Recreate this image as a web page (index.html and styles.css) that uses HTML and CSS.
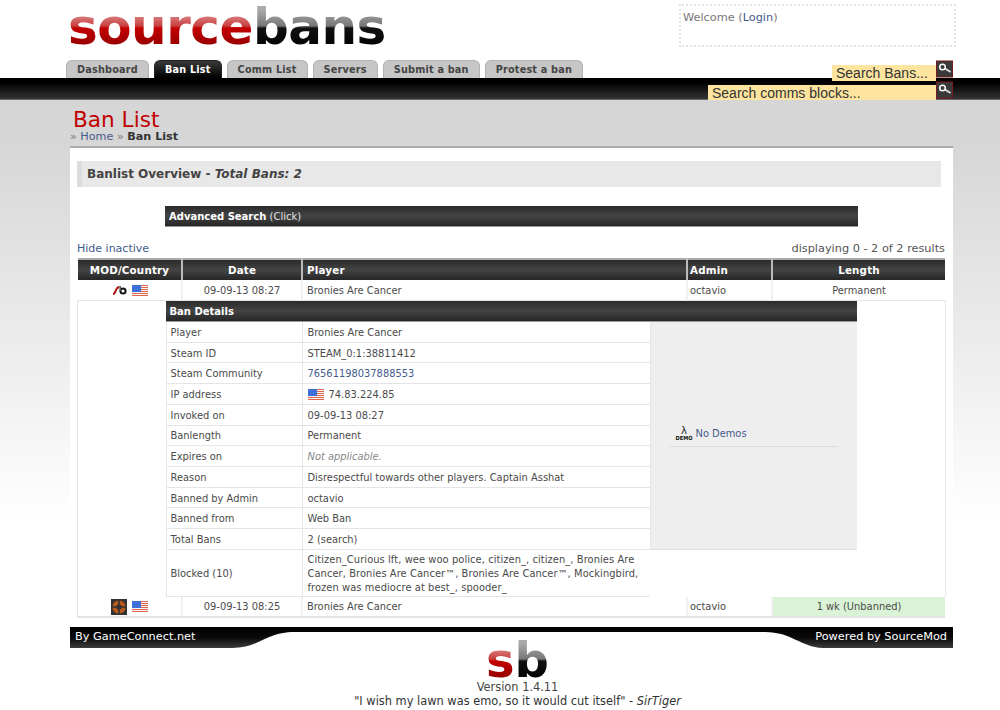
FILE: index.html
```html
<!DOCTYPE html>
<html lang="en">
<head>
    <meta charset="UTF-8">
    <title>SourceBans - Ban List</title>
    <link rel="stylesheet" href="styles.css">
</head>
<body>
    <svg class="defs" width="0" height="0">
        <symbol id="flag-us" viewBox="0 0 16 11">
            <rect width="16" height="11" fill="#f4f4f4"/>
            <rect width="16" height="1" fill="#e0654f"/>
            <rect y="2" width="16" height="1" fill="#e0654f"/>
            <rect y="4" width="16" height="1" fill="#e0654f"/>
            <rect y="6" width="16" height="1" fill="#e0654f"/>
            <rect y="8" width="16" height="1" fill="#e0654f"/>
            <rect y="10" width="16" height="1" fill="#e0654f"/>
            <rect width="9" height="7" fill="#3f6fd8"/>
        </symbol>
        <symbol id="search" viewBox="0 0 17 17">
            <rect x="0.5" y="0.5" width="16" height="16" fill="#3a3a3a" stroke="#7a1a1a"/>
            <circle cx="6.5" cy="6.5" r="2.8" fill="none" stroke="#fff" stroke-width="1.5"/>
            <line x1="9" y1="8" x2="14.5" y2="11.5" stroke="#ddd" stroke-width="2"/>
        </symbol>
    </svg>

    <div class="header">
        <div class="header-top">
            <div class="logo"><span class="red">source</span><span class="black">bans</span></div>
            <div class="welcome">Welcome (<a href="#">Login</a>)</div>
        </div>
        <div class="tabs">
            <a class="tab" href="#">Dashboard</a>
            <a class="tab active" href="#">Ban List</a>
            <a class="tab" href="#">Comm List</a>
            <a class="tab" href="#">Servers</a>
            <a class="tab" href="#">Submit a ban</a>
            <a class="tab" href="#">Protest a ban</a>
        </div>
        <div class="search search-bans">
            <div class="search-input">Search Bans...</div>
            <svg class="search-btn"><use href="#search"/></svg>
        </div>
        <div class="search search-comms">
            <div class="search-input">Search comms blocks...</div>
            <svg class="search-btn"><use href="#search"/></svg>
        </div>
    </div>
    <div class="bar"></div>

    <div class="page">
        <div class="title">
            <h1>Ban List</h1>
            <div class="crumbs"><span class="sep">»</span> <a href="#">Home</a> <span class="sep">»</span> <b>Ban List</b></div>
        </div>

        <div class="content">
            <h3 class="overview">Banlist Overview - <i>Total Bans: 2</i></h3>
            <div class="dark-bar adv-search"><b>Advanced Search</b> (Click)</div>

            <div class="list-top">
                <a href="#">Hide inactive</a>
                <span class="results">displaying 0 - 2 of 2 results</span>
            </div>

            <table class="bans">
                <colgroup>
                    <col class="col-mod"><col class="col-date"><col class="col-player"><col class="col-admin"><col class="col-length">
                </colgroup>
                <tr>
                    <th>MOD/Country</th>
                    <th>Date</th>
                    <th class="left">Player</th>
                    <th class="left">Admin</th>
                    <th>Length</th>
                </tr>
                <tr>
                    <td class="center">
                        <div class="icons">
                            <svg class="mod-sb" width="15" height="10" viewBox="0 0 15 10">
                                <path d="M1 9 C4 9 3 3 7 2" fill="none" stroke="#b01010" stroke-width="2"/>
                                <circle cx="11" cy="6" r="2.6" fill="none" stroke="#111" stroke-width="2"/>
                                <line x1="8" y1="1" x2="8.6" y2="6" stroke="#555" stroke-width="1.6"/>
                            </svg>
                            <svg class="flag"><use href="#flag-us"/></svg>
                        </div>
                    </td>
                    <td class="center">09-09-13 08:27</td>
                    <td>Bronies Are Cancer</td>
                    <td>octavio</td>
                    <td class="center">Permanent</td>
                </tr>
                <tr>
                    <td class="detail-cell" colspan="5">
                        <div class="dark-bar details-bar"><b>Ban Details</b></div>
                        <div class="details">
                            <div class="lbl">Player</div><div class="val">Bronies Are Cancer</div>
                            <div class="demo-panel">
                                <div class="demo-line">
                                    <svg class="demo-icon" width="18" height="16" viewBox="0 0 18 16">
                                        <text x="9" y="8.5" text-anchor="middle" font-size="10" fill="#222">λ</text>
                                        <text x="0.5" y="15" font-size="5.6" font-weight="bold" textLength="17" lengthAdjust="spacingAndGlyphs" fill="#111">DEMO</text>
                                    </svg>
                                    <a href="#">No Demos</a>
                                </div>
                            </div>
                            <div class="lbl">Steam ID</div><div class="val">STEAM_0:1:38811412</div>
                            <div class="lbl">Steam Community</div><div class="val"><a href="#">76561198037888553</a></div>
                            <div class="lbl">IP address</div><div class="val"><svg class="flag flag-ip"><use href="#flag-us"/></svg>74.83.224.85</div>
                            <div class="lbl">Invoked on</div><div class="val">09-09-13 08:27</div>
                            <div class="lbl">Banlength</div><div class="val">Permanent</div>
                            <div class="lbl">Expires on</div><div class="val"><i class="muted">Not applicable.</i></div>
                            <div class="lbl">Reason</div><div class="val">Disrespectful towards other players. Captain Asshat</div>
                            <div class="lbl">Banned by Admin</div><div class="val">octavio</div>
                            <div class="lbl">Banned from</div><div class="val">Web Ban</div>
                            <div class="lbl">Total Bans</div><div class="val">2 (search)</div>
                            <div class="lbl lbl-blocked">Blocked (10)</div>
                            <div class="val val-blocked">Citizen_Curious lft, wee woo police, citizen_, citizen_, Bronies Are<br>Cancer, Bronies Are Cancer™, Bronies Are Cancer™, Mockingbird,<br>frozen was mediocre at best_, spooder_</div>
                        </div>
                    </td>
                </tr>
                <tr class="last">
                    <td class="center">
                        <div class="icons">
                            <svg class="mod-tf" width="16" height="16" viewBox="0 0 16 16">
                                <rect width="16" height="16" fill="#333"/>
                                <circle cx="8" cy="8" r="6.6" fill="#b85a1c"/>
                                <circle cx="8" cy="8" r="2.6" fill="#333"/>
                                <path d="M8 1v14M1 8h14" stroke="#333" stroke-width="1.6"/>
                            </svg>
                            <svg class="flag"><use href="#flag-us"/></svg>
                        </div>
                    </td>
                    <td class="center">09-09-13 08:25</td>
                    <td>Bronies Are Cancer</td>
                    <td>octavio</td>
                    <td class="center unbanned">1 wk (Unbanned)</td>
                </tr>
            </table>
        </div>

        <div class="footer-bar">
            <svg class="footer-shape" width="883" height="21" viewBox="0 0 883 21">
                <defs>
                    <linearGradient id="fade" x1="0" y1="0" x2="0" y2="1">
                        <stop offset="0" stop-color="#000"/>
                        <stop offset="0.5" stop-color="#0a0a0a"/>
                        <stop offset="1" stop-color="#3c3c3c"/>
                    </linearGradient>
                </defs>
                <path d="M0 0H883V21H753C730 20 722 5 695 5H225C195 5 190 21 162 21H0Z" fill="url(#fade)"/>
            </svg>
            <span>By GameConnect.net</span>
            <span>Powered by SourceMod</span>
        </div>

        <div class="footer">
            <div class="footer-logo"><span class="red">s</span><span class="black">b</span></div>
            <div>Version 1.4.11</div>
            <div class="quote">"I wish my lawn was emo, so it would cut itself" - <i>SirTiger</i></div>
        </div>
    </div>
</body>
</html>
```

FILE: styles.css
```css
body {
    margin: 0;
    font-family: 'DejaVu Sans', Verdana, sans-serif;
    font-size: 9.9px;
    color: #4a4a4a;
    background: #fff linear-gradient(#d6d6d6, #d6d6d6 10%, #fff) no-repeat 0 100px / 100% 420px;
}
a {
    color: #445a8c;
    text-decoration: none;
}
.defs {
    position: absolute;
}

/* header */
.header {
    position: relative;
    height: 78px;
    background-color: #fff;
}
.header-top {
    display: flex;
    justify-content: space-between;
    height: 60px;
    padding: 0 44px 0 68px;
}
.logo {
    font-weight: bold;
    font-size: 50px;
    line-height: 54px;
    letter-spacing: -0.5px;
    height: 54px;
}
.red,
.black {
    -webkit-background-clip: text;
    background-clip: text;
    color: transparent;
}
.red {
    background-image: linear-gradient(#d98080 30%, #c94040 48%, #c40000 52%, #8c0000 88%);
}
.black {
    background-image: linear-gradient(#aaa 20%, #777 48%, #111 52%, #000 88%);
}
.welcome {
    box-sizing: border-box;
    width: 277px;
    height: 43px;
    margin-top: 4px;
    padding: 5px 2px;
    border: 2px dotted #e4e4e4;
    font-size: 11.3px;
    color: #777;
}
.tabs {
    display: flex;
    gap: 5px;
    padding-left: 66px;
}
.tab {
    box-sizing: border-box;
    height: 18px;
    padding: 0 10px;
    border: 1px solid #b5b0b0;
    border-bottom: none;
    border-radius: 6px 6px 0 0;
    background-color: #c6c6c6;
    color: #444;
    font-weight: bold;
    font-size: 9.7px;
    line-height: 18px;
    letter-spacing: 0.2px;
}
.tab.active {
    border-color: #222;
    background: linear-gradient(#3a3a3a, #000);
    color: #fff;
}
.bar {
    height: 21px;
    border-bottom: 1px solid #666;
    background: linear-gradient(#000, #000 20%, #333);
}

/* search boxes lie over the black bar */
.search {
    position: absolute;
    right: 47px;
    display: flex;
    align-items: flex-start;
}
.search-bans {
    top: 60px;
}
.search-comms {
    top: 81px;
}
.search-input {
    box-sizing: border-box;
    height: 16px;
    margin-top: 5px;
    padding-left: 4px;
    background-color: #fde5a0;
    color: #333;
    font-family: 'Liberation Sans', Arial, sans-serif;
    font-size: 14px;
    line-height: 16px;
}
.search-comms .search-input {
    height: 15px;
    margin-top: 4px;
    width: 228px;
}
.search-bans .search-input {
    width: 104px;
}
.search-btn {
    width: 17px;
    height: 18px;
}

/* main */
.page {
    width: 883px;
    margin-left: 70px;
}
.title {
    height: 46px;
    border-bottom: 2px solid #aaa;
}
h1 {
    margin: 0;
    padding: 9px 0 0 3px;
    color: #c00000;
    font-size: 21.6px;
    font-weight: normal;
    line-height: 22px;
}
.crumbs {
    font-size: 11.2px;
    line-height: 12px;
}
.crumbs .sep {
    color: #777;
    font-size: 11px;
}
.crumbs b {
    color: #333;
}
.content {
    padding: 13px 8px 9px 7px;
    background-color: #fff;
}
.overview {
    box-sizing: border-box;
    width: 864px;
    height: 26px;
    margin: 0;
    padding-left: 5px;
    border-left: 5px solid #ddd;
    background-color: #e8e8e8;
    color: #444;
    font-size: 12px;
    line-height: 26px;
}
.overview i {
    font-weight: bold;
}
.dark-bar {
    box-sizing: border-box;
    height: 21px;
    padding-left: 4px;
    border-bottom: 1px solid #999;
    background: linear-gradient(#2b2b2b, #444 50%, #262626);
    color: #e4e4e4;
    line-height: 21px;
    font-size: 10px;
}
.dark-bar b {
    color: #fff;
}
.adv-search {
    width: 693px;
    margin: 19px 0 0 88px;
}
.list-top {
    display: flex;
    justify-content: space-between;
    margin-top: 15px;
    height: 16px;
    font-size: 11px;
    line-height: 13px;
    color: #555;
}
.results {
    font-size: 11.3px;
}
.bans {
    width: 868px;
    margin-left: -1px;
    table-layout: fixed;
    border-collapse: collapse;
    border-top: 2px solid #aaa;
}
.col-mod { width: 105px; }
.col-date { width: 120px; }
.col-player { width: 385px; }
.col-admin { width: 85px; }
.col-length { width: 173px; }
.bans th {
    height: 20px;
    padding: 0 4px;
    border-top: 1px solid #fff;
    border-left: 2px solid #bbb;
    background: linear-gradient(#2b2b2b, #444 50%, #262626);
    color: #fff;
    font-size: 10.3px;
    letter-spacing: 0.2px;
}
.bans th:first-child {
    border-left-color: #fff;
}
.bans th.left {
    text-align: left;
}
.bans td {
    height: 20px;
    padding: 0 4px;
    border-left: 2px solid #f0f0f0;
}
.bans td:first-child {
    border-left: none;
}
.bans th:nth-child(4),
.bans td:nth-child(4) {
    padding-left: 2px;
}
.bans td.center {
    text-align: center;
}
.icons {
    display: flex;
    align-items: center;
    justify-content: flex-end;
    gap: 5px;
    padding-right: 29px;
}
.flag {
    width: 16px;
    height: 11px;
}
.bans td.detail-cell {
    height: 296px;
    padding: 0 0 0 88px;
    vertical-align: top;
    border: 1px solid #e5e5e5;
    border-bottom: none;
}
.details-bar {
    width: 691px;
    line-height: 22px;
}
.details {
    display: grid;
    grid-template-columns: 137px 347px 207px;
    grid-template-rows: repeat(11, 20.73px) auto;
}
.lbl,
.val {
    display: flex;
    align-items: center;
    box-sizing: border-box;
    padding-top: 1px;
    padding-left: 4px;
    border-bottom: 1px solid #e5e5e5;
}
.lbl {
    border-left: 1px solid #e5e5e5;
    border-right: 1px solid #e5e5e5;
}
.val {
    padding-left: 5px;
}
.flag-ip {
    margin-right: 5px;
}
.muted {
    color: #888;
}
.demo-panel {
    grid-column: 3;
    grid-row: 1 / 12;
    display: flex;
    align-items: center;
    justify-content: center;
    background-color: #eee;
    border-bottom: 1px solid #e0e0e0;
    border-left: 1px solid #e5e5e5;
}
.demo-line {
    display: flex;
    align-items: center;
    gap: 3px;
    width: 168px;
    height: 26px;
    padding-left: 5px;
    box-sizing: border-box;
    border-bottom: 1px solid #ddd;
    margin-top: -3px;
}
.lbl-blocked {
    height: 47px;
}
.val-blocked {
    display: block;
    height: 47px;
    padding-top: 3px;
    line-height: 14px;
    letter-spacing: 0.08px;
}
.bans tr.last td {
    height: 19px;
    border-bottom: 2px solid #e5e5e5;
}
.bans tr.last td:first-child {
    border-left: 1px solid #e5e5e5;
}
.bans td.unbanned {
    background-color: #daf3d6;
}

/* footer */
.footer-bar {
    position: relative;
    display: flex;
    justify-content: space-between;
    height: 21px;
    padding: 0 6px 0 5px;
    color: #fff;
    font-size: 11.3px;
    line-height: 18px;
}
.footer-shape {
    position: absolute;
    left: 0;
    top: 0;
}
.footer-bar span {
    position: relative;
    padding-top: 1px;
}
.footer {
    padding-left: 12px;
    text-align: center;
    font-size: 11.4px;
    line-height: 14px;
    color: #444;
}
.footer-logo {
    position: relative;
    height: 39px;
    margin-top: -7px;
    font-weight: bold;
    font-size: 48px;
    line-height: 39px;
}
.quote {
    color: #333;
}
```
